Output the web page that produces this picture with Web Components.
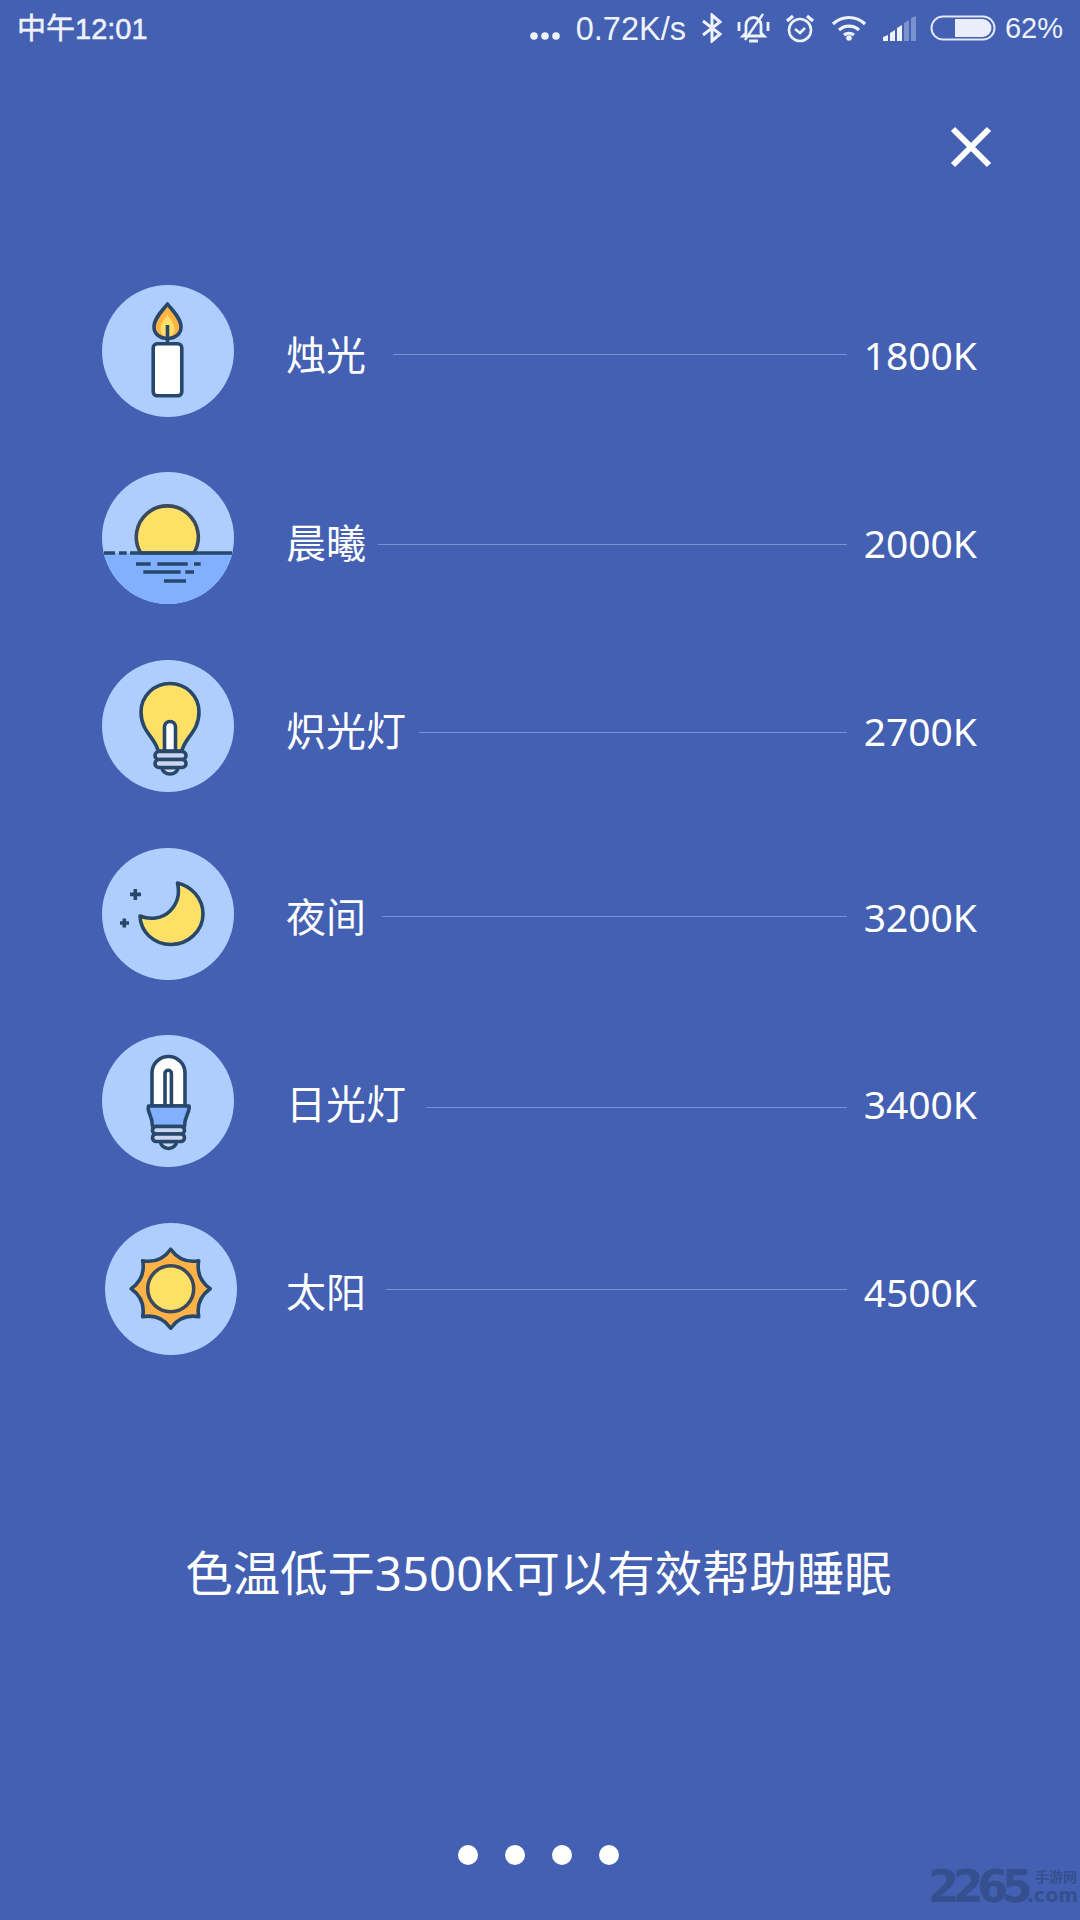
<!DOCTYPE html>
<html lang="zh">
<head>
<meta charset="utf-8">
<title>色温</title>
<style>
  html, body { margin: 0; padding: 0; background: #4360b2; }
  body { width: 1080px; height: 1920px; overflow: hidden; font-family: "Noto Sans", "Noto Sans CJK SC", sans-serif; color: #fff; }
  sleep-screen { width: 1080px; height: 1920px; }
</style>
</head>
<body>

<sleep-screen>
  <status-bar slot="status"></status-bar>
  <close-button slot="close"></close-button>
  <temp-row kind="candle" value="1800K" gap="27" line="3" text="4">烛光</temp-row>
  <temp-row kind="dawn" value="2000K" gap="12" line="5" text="5">晨曦</temp-row>
  <temp-row kind="bulb" value="2700K" gap="13" line="6" text="5">炽光灯</temp-row>
  <temp-row kind="moon" value="3200K" gap="16" line="2" text="3">夜间</temp-row>
  <temp-row kind="tube" value="3400K" gap="20" line="5" text="3">日光灯</temp-row>
  <temp-row kind="sun" value="4500K" gap="20" line="0" text="3" nudge="3">太阳</temp-row>
  <span slot="tip">色温低于3500K可以有效帮助睡眠</span>
  <page-dots slot="dots" count="4"></page-dots>
  <site-mark slot="mark"></site-mark>
</sleep-screen>

<script>
const INK = "#27476b";
const SW = 3.6;
const ICONS = {
  candle: `
    <rect x="51.2" y="58.8" width="28.6" height="52" rx="4" fill="#fff" stroke="${INK}" stroke-width="${SW}"/>
    <path d="M65.5 19C61 25 52 33 52 42C52 49 58 53.5 65.5 53.5C73 53.5 79 49 79 42C79 33 70 25 65.500 19Z" fill="#ffb347" stroke="${INK}" stroke-width="${SW}" stroke-linejoin="round"/>
    <path d="M65.5 30C62 35 58.5 39 58.5 44C58.5 49 62 51.5 65.5 51.5C69 51.5 72.5 49 72.5 44C72.5 39 69 35 65.5 30Z" fill="#ffe066"/>
    <path d="M65.5 40V58" stroke="${INK}" stroke-width="${SW}"/>`,
  dawn: `
    <path d="M0 81H132A66 66 0 0 1 0 81Z" fill="#80b0ff"/>
    <path d="M38.800 81A31 31 0 1 1 91.800 81Z" fill="#ffe066" stroke="#3a4a5c" stroke-width="${SW}"/>
    <path d="M2 81H13M17 81H24.700M28 81H130M34 92H48.700M55.300 92H85.700M92 92H98.700M41.300 100H78.700M83.300 100H92M62 109H84" stroke="${INK}" stroke-width="${SW}" fill="none"/>`,
  bulb: `
    <path d="M56 91C54 78 39 72 39 52C39 36 52 23.500 68 23.500C84 23.500 97 36 97 52C97 72 82 78 80 91Z" fill="#ffe066" stroke="${INK}" stroke-width="${SW}"/>
    <path d="M62.500 91V67A5.500 5.500 0 0 1 73.500 67V91Z" fill="#fff" stroke="${INK}" stroke-width="${SW}"/>
    <path d="M60 107.500A8 6.500 0 0 0 76 107.500Z" fill="#ccd6f0" stroke="${INK}" stroke-width="${SW}"/>
    <rect x="53" y="91.500" width="31" height="8" rx="4" fill="#ccd6f0" stroke="${INK}" stroke-width="${SW}"/>
    <rect x="53" y="99.500" width="31" height="8" rx="4" fill="#ccd6f0" stroke="${INK}" stroke-width="${SW}"/>`,
  moon: `
    <path d="M75.500 35C89 38 101 50 101 66C101 83 86 96.500 69 96.500C52 96.500 38.500 84 38 68C48 72 60 71 68 63C76 55 78 46 75.500 35Z" fill="#ffe066" stroke="${INK}" stroke-width="${SW}" stroke-linejoin="round"/>
    <path d="M33.300 41V52M28 46.400H39M22.300 70.500V79.500M18 75H27" stroke="${INK}" stroke-width="${SW}" fill="none"/>`,
  tube: `
    <g transform="translate(-0.500 0)">
    <path d="M50.500 71V38A16.500 16.500 0 0 1 83.500 38V71Z" fill="#fff" stroke="${INK}" stroke-width="${SW}"/>
    <path d="M63.500 71V38.500A3.200 3.200 0 0 1 69.900 38.500V71" fill="none" stroke="${INK}" stroke-width="${SW}"/>
    <path d="M47 71H87.500C89 77 83 80 83 91.500H51C51 80 45 77 47 71Z" fill="#80b0ff" stroke="${INK}" stroke-width="${SW}" stroke-linejoin="round"/>
    <path d="M59 106.500A8 7 0 0 0 75 106.500Z" fill="#ccd6f0" stroke="${INK}" stroke-width="${SW}"/>
    <rect x="51" y="91.500" width="32" height="7.500" rx="3.700" fill="#ccd6f0" stroke="${INK}" stroke-width="${SW}"/>
    <rect x="51" y="99" width="32" height="7.500" rx="3.700" fill="#ccd6f0" stroke="${INK}" stroke-width="${SW}"/>
    </g>`,
  sun: `
    <g transform="translate(65.700 65.700)">
      <path d="M0 -39.500Q10.300 -24.900 28 -28Q24.900 -10.300 39.500 0Q24.900 10.300 28 28Q10.300 24.900 0 39.500Q-10.300 24.900 -28 28Q-24.900 10.300 -39.500 0Q-24.900 -10.300 -28 -28Q-10.300 -24.900 0 -39.500Z" fill="#ffb347" stroke="${INK}" stroke-width="${SW}" stroke-linejoin="round"/>
      <circle r="23" fill="#ffe066" stroke="#3a4a5c" stroke-width="${SW}"/>
    </g>`
};

class SleepScreen extends HTMLElement {
  constructor() {
    super();
    this.attachShadow({ mode: "open" }).innerHTML = `
      <style>
        :host { display: flex; flex-direction: column; position: relative; box-sizing: border-box; }
        .close { display: flex; justify-content: flex-end; padding: 70px 88px 0 0; }
        .list { display: grid; grid-auto-rows: 187.6px; margin-top: 89px; padding: 0 103px 0 102px; }
        .tip { margin-top: 155px; height: 70px; display: flex; align-items: center; justify-content: center; padding-right: 3px; font-size: 47.400px; line-height: 70px; }
        .dots { margin-top: 237px; display: flex; justify-content: center; padding-right: 4px; }
        ::slotted([slot="mark"]) { position: absolute; right: 2px; bottom: 15px; }
      </style>
      <slot name="status"></slot>
      <div class="close"><slot name="close"></slot></div>
      <div class="list"><slot></slot></div>
      <div class="tip"><slot name="tip"></slot></div>
      <div class="dots"><slot name="dots"></slot></div>
      <slot name="mark"></slot>`;
  }
}

class StatusBar extends HTMLElement {
  constructor() {
    super();
    this.attachShadow({ mode: "open" }).innerHTML = `
      <style>
        :host { display: flex; align-items: center; justify-content: space-between; height: 56px; padding: 0 17px; color: #eef2fb; font: 29px "Liberation Sans", "Noto Sans CJK SC", sans-serif; }
        .time { margin-top: -5px; -webkit-text-stroke: .5px #eef2fb; }
        .right { display: flex; align-items: center; }
        svg { display: block; flex: none; }
        .speed { font-size: 32.500px; margin: 2px 15px 0 16px; }
      </style>
      <span class="time">中午12:01</span>
      <div class="right">
        <svg width="30" height="8" viewBox="0 0 30 8" style="margin-top:15px"><circle cx="4" cy="4" r="3.800" fill="#eef2fb"/><circle cx="15" cy="4" r="3.800" fill="#eef2fb"/><circle cx="26" cy="4" r="3.800" fill="#eef2fb"/></svg>
        <span class="speed">0.72K/s</span>
        <svg width="22" height="30" viewBox="0 0 22 30" fill="none" stroke="#eef2fb" stroke-width="3"><path d="M2 8L19 21L11 28V2L19 9L2 22"/></svg>
        <svg width="33" height="32" viewBox="0 0 33 32" fill="none" stroke="#eef2fb" stroke-width="2.800" style="margin-left:14px"><path d="M9 21V13A7.500 7.500 0 0 1 24 13V21L27 24H6Z"/><path d="M12 29H21" stroke-width="3"/><path d="M26 2L8 28" stroke-width="2.400"/><path d="M2 10V19M31 10V19"/></svg>
        <svg width="30" height="31" viewBox="0 0 30 31" fill="none" stroke="#eef2fb" stroke-width="2.600" style="margin-left:15px"><circle cx="15" cy="17" r="11"/><path d="M10 16L15 20L20 15"/><path d="M2 8L8 3M28 8L22 3" stroke-width="3.400"/></svg>
        <svg width="36" height="26" viewBox="0 0 36 26" fill="none" stroke="#eef2fb" stroke-width="3.200" style="margin-left:16px"><path d="M2 9A23 23 0 0 1 34 9"/><path d="M8 15A15 15 0 0 1 28 15"/><path d="M13 20A8 8 0 0 1 23 20"/><circle cx="18" cy="23" r="2.800" fill="#eef2fb" stroke="none"/></svg>
        <svg width="34" height="26" viewBox="0 0 34 26" style="margin-left:16px"><path d="M0 26V22L5 20V26Z" fill="#eef2fb"/><path d="M7 26V18L12 15V26Z" fill="#eef2fb"/><path d="M14 26V13L19 10V26Z" fill="#eef2fb"/><path d="M21 26V8L26 5V26Z" fill="#7a92cf"/><path d="M28 26V3L33 1V26Z" fill="#7a92cf"/></svg>
        <svg width="66" height="26" viewBox="0 0 66 26" style="margin-left:13px"><rect x="1.500" y="1.500" width="63" height="23" rx="11.500" fill="none" stroke="#e2e8f7" stroke-width="2"/><path d="M25 4H52.500A9 9 0 0 1 52.500 22H25Z" fill="#e9eefa"/></svg>
        <span style="margin-left:9px">62%</span>
      </div>`;
  }
}

class CloseButton extends HTMLElement {
  constructor() {
    super();
    this.attachShadow({ mode: "open" }).innerHTML = `
      <style>
        :host { display: block; width: 42px; height: 42px; }
        svg { display: block; }
      </style>
      <svg width="42" height="42" viewBox="0 0 42 42"><path d="M3 3L39 39M39 3L3 39" stroke="#fff" stroke-width="6"/></svg>`;
  }
}

class TempRow extends HTMLElement {
  constructor() {
    super();
    this.attachShadow({ mode: "open" }).innerHTML = `
      <style>
        :host { display: flex; align-items: center; }
        .icon { width: 132px; height: 132px; flex: none; border-radius: 50%; background: #aecffd; overflow: hidden; }
        .icon svg { display: block; }
        .label { margin-left: 52px; font-size: 40px; line-height: 56px; white-space: nowrap; }
        .line { flex: 1; height: 1px; background: #7b92d2; }
        .value { width: 130px; text-align: right; font-size: 39px; line-height: 56px; }
      </style>
      <div class="icon"><svg width="132" height="132" viewBox="0 0 132 132"></svg></div>
      <span class="label"><slot></slot></span>
      <div class="line"></div>
      <span class="value"></span>`;
  }
  connectedCallback() {
    const s = this.shadowRoot;
    s.querySelector("svg").innerHTML = ICONS[this.getAttribute("kind")];
    const value = s.querySelector(".value");
    value.textContent = this.getAttribute("value");
    const nudge = Number(this.getAttribute("nudge") || 0);
    const icon = s.querySelector(".icon");
    const label = s.querySelector(".label");
    const line = s.querySelector(".line");
    if (nudge) {
      icon.style.marginLeft = nudge + "px";
      label.style.marginLeft = 52 - nudge + "px";
    }
    line.style.marginLeft = this.getAttribute("gap") + "px";
    line.style.marginTop = this.getAttribute("line") * 2 + 2 + "px";
    label.style.marginTop = this.getAttribute("text") * 2 + "px";
    value.style.marginTop = this.getAttribute("text") * 2 + "px";
  }
}

class PageDots extends HTMLElement {
  constructor() {
    super();
    this.attachShadow({ mode: "open" }).innerHTML = `
      <style>
        :host { display: flex; gap: 27px; }
        i { display: block; width: 20px; height: 20px; border-radius: 50%; background: #fff; }
      </style>`;
  }
  connectedCallback() {
    const n = Number(this.getAttribute("count"));
    for (let k = 0; k < n; k++) this.shadowRoot.appendChild(document.createElement("i"));
  }
}

class SiteMark extends HTMLElement {
  constructor() {
    super();
    this.attachShadow({ mode: "open" }).innerHTML = `
      <style>
        :host { display: flex; align-items: flex-end; color: #34508f; }
        .num { font: bold 44px/36px "DejaVu Sans", sans-serif; letter-spacing: -6px; }
        .side { display: flex; flex-direction: column; align-items: flex-end; }
        .cn { font: bold 14px/17px "Liberation Sans", "Noto Sans CJK SC", sans-serif; margin-right: 1px; }
        .com { font: bold 19px/19px "DejaVu Sans", sans-serif; }
      </style>
      <span class="num">2265</span>
      <div class="side"><span class="cn">手游网</span><span class="com">.com</span></div>`;
  }
}

customElements.define("sleep-screen", SleepScreen);
customElements.define("status-bar", StatusBar);
customElements.define("close-button", CloseButton);
customElements.define("temp-row", TempRow);
customElements.define("page-dots", PageDots);
customElements.define("site-mark", SiteMark);
</script>
</body>
</html>
